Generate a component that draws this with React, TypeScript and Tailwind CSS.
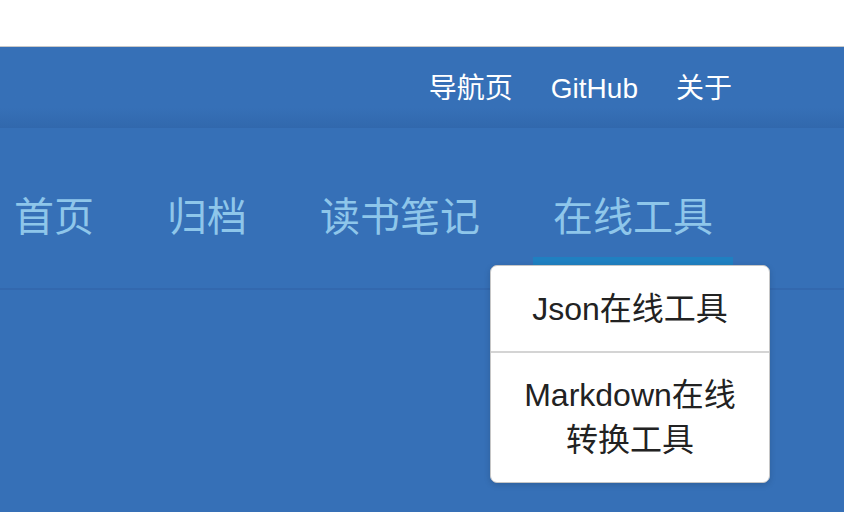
import React from "react";

const topLinks = ["导航页", "GitHub", "关于"];
const navItems = ["首页", "归档", "读书笔记", "在线工具"];

export default function App() {
  return (
    <div
      className="w-[844px] h-[512px] overflow-hidden bg-[#3670b7]"
      style={{ fontFamily: '"Liberation Sans", "Noto Sans CJK SC", sans-serif' }}
    >
      {/* white strip above the header */}
      <div className="h-[47px] bg-white border-b border-[#c9c9c9]" />

      {/* top links bar */}
      <div className="h-[81px] bg-gradient-to-b from-[#3670b7] from-75% to-[#3168ad] flex items-center justify-end pr-[112px] pt-[3px] gap-[38px] text-[28px] text-white">
        {topLinks.map((t) => (
          <a key={t} className="leading-none">
            {t}
          </a>
        ))}
      </div>

      {/* main nav */}
      <div className="relative h-[162px] border-b-2 border-[#3368ae]">
        <ul className="flex gap-[33px] ml-[-6px] h-full">
          {navItems.map((t, i) => (
            <li key={t} className="relative h-full">
              <a className="flex h-full items-center px-5 pt-[18px] text-[40px] leading-none text-[#8ec6ea]">
                {t}
              </a>
              {i === navItems.length - 1 && (
                <div className="absolute left-0 right-0 top-[129px] h-[10px] bg-[#1f80c1]" />
              )}
            </li>
          ))}
        </ul>

        {/* dropdown */}
        <div className="absolute left-[490px] top-[137px] w-[280px] bg-white border border-[#c6c6c6] rounded-[7px] shadow-[0_2px_6px_rgba(0,0,0,0.15)] text-[32px] leading-[45px] text-[#222] text-center">
          <div className="px-5 pt-[21px] pb-[19px] border-b-2 border-[#d4d4d4]">Json在线工具</div>
          <div className="px-5 pt-[20px] pb-[19px]">Markdown在线转换工具</div>
        </div>
      </div>
    </div>
  );
}
